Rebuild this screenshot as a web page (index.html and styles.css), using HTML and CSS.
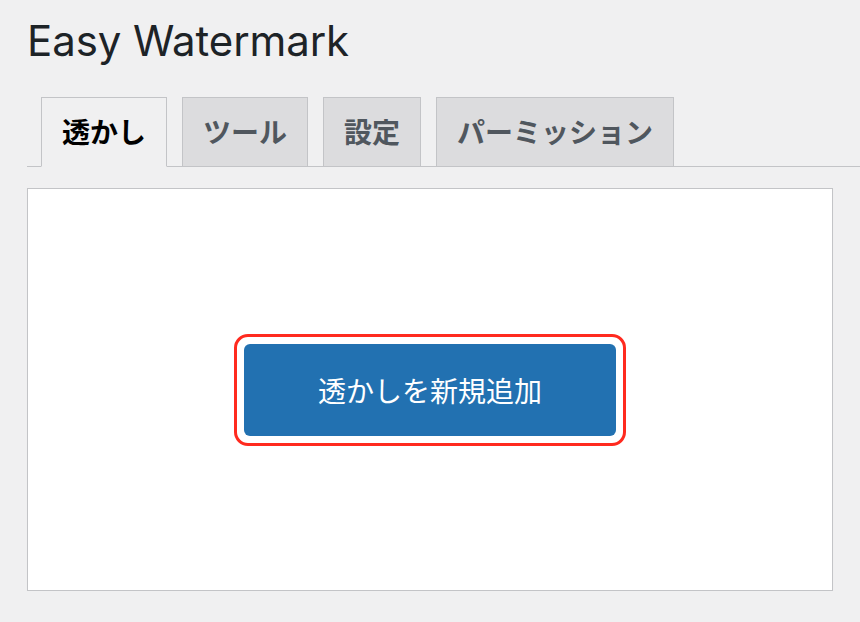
FILE: index.html
```html
<!DOCTYPE html>
<html lang="ja">
<head>
  <meta charset="UTF-8">
  <title>Easy Watermark</title>
  <link rel="stylesheet" href="styles.css">
</head>
<body>
  <div class="wrap">
    <h1 class="page-title">Easy Watermark</h1>

    <nav class="tabs">
      <a class="tab active" href="#">透かし</a>
      <a class="tab" href="#">ツール</a>
      <a class="tab" href="#">設定</a>
      <a class="tab" href="#">パーミッション</a>
    </nav>

    <div class="panel">
      <span class="highlight">
        <a class="button-primary" href="#">透かしを新規追加</a>
      </span>
    </div>
  </div>
</body>
</html>
```

FILE: styles.css
```css
body {
  margin: 0;
  background: #f0f0f1;
  color: #1d2327;
  font-family: Inter, "Noto Sans CJK JP", sans-serif;
}

.wrap {
  padding: 16px 0 0 27px;
}

.page-title {
  margin: 0;
  font-size: 42px;
  font-weight: 400;
  line-height: 50px;
  letter-spacing: -0.1px;
}

.tabs {
  display: flex;
  margin-top: 31px;
  padding-left: 14px;
  border-bottom: 1px solid #c3c4c7;
}

.tab {
  display: block;
  margin: 0 15px -1px 0;
  padding: 14px 20px 15px;
  font-family: "Noto Sans CJK JP", sans-serif;
  font-size: 28px;
  font-weight: 700;
  line-height: 39px;
  color: #50575e;
  background: #dcdcde;
  border: 1px solid #c3c4c7;
  text-decoration: none;
}

.tab.active {
  background: #f0f0f1;
  color: #000;
  border-bottom-color: #f0f0f1;
}

.panel {
  margin: 21px 27px 0 0;
  height: 401px;
  background: #fff;
  border: 1px solid #c3c4c7;
  box-shadow: 0 1px 1px rgba(0, 0, 0, .04);
  display: flex;
  align-items: center;
  justify-content: center;
}

.highlight {
  display: block;
  padding: 7px;
  border: 3px solid #ff2a1f;
  border-radius: 14px;
}

.button-primary {
  display: block;
  width: 372px;
  height: 92px;
  line-height: 92px;
  text-align: center;
  background: #2271b1;
  color: #fff;
  border-radius: 6px;
  font-family: "Noto Sans CJK JP", sans-serif;
  font-size: 28px;
  text-decoration: none;
}
```
